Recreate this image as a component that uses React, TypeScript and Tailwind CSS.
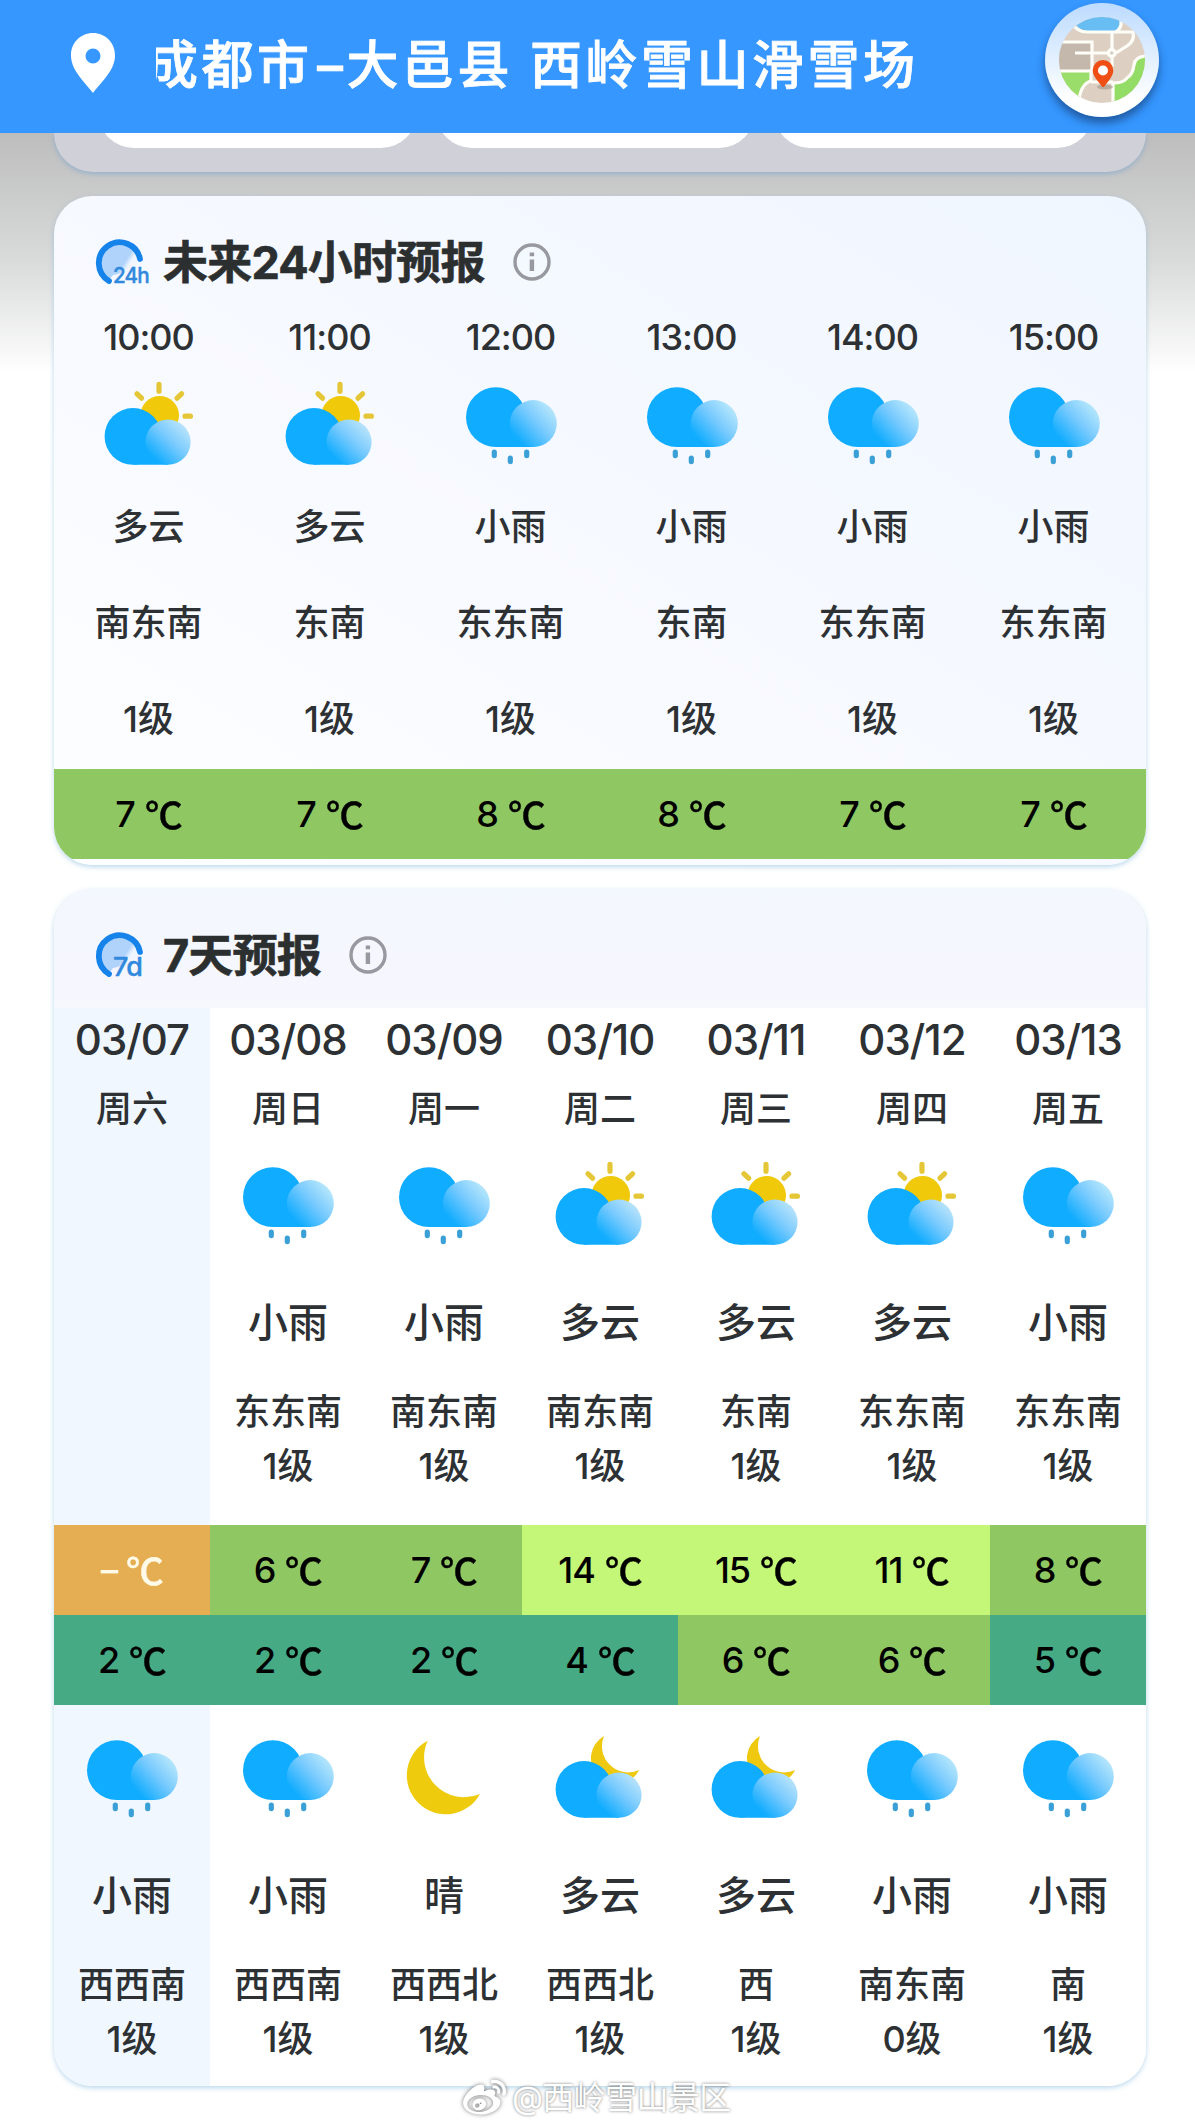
import clsx from "clsx";
import { FaWeibo } from "react-icons/fa";

type Sky = "cloudy" | "rain" | "clear-night" | "cloudy-night";

interface Hour {
  time: string;
  sky: Sky;
  text: string;
  wind: string;
  temp: number;
}

interface HalfDay {
  sky: Sky;
  text: string;
  wind: string;
  level: string;
}

interface Day {
  date: string;
  week: string;
  day?: HalfDay;
  high: string;
  highClass: string;
  low: string;
  lowClass: string;
  night: HalfDay;
}

const hours: Hour[] = [
  { time: "10:00", sky: "cloudy", text: "多云", wind: "南东南", temp: 7 },
  { time: "11:00", sky: "cloudy", text: "多云", wind: "东南", temp: 7 },
  { time: "12:00", sky: "rain", text: "小雨", wind: "东东南", temp: 8 },
  { time: "13:00", sky: "rain", text: "小雨", wind: "东南", temp: 8 },
  { time: "14:00", sky: "rain", text: "小雨", wind: "东东南", temp: 7 },
  { time: "15:00", sky: "rain", text: "小雨", wind: "东东南", temp: 7 },
];

const ORANGE = "bg-[#e5ae53] text-[#fffbe8]";
const GREEN = "bg-[#8fc763] text-black";
const LIME = "bg-[#c4f777] text-black";
const TEAL = "bg-[#46ab85] text-black";

const days: Day[] = [
  {
    date: "03/07",
    week: "周六",
    high: "-",
    highClass: ORANGE,
    low: "2",
    lowClass: TEAL,
    night: { sky: "rain", text: "小雨", wind: "西西南", level: "1级" },
  },
  {
    date: "03/08",
    week: "周日",
    day: { sky: "rain", text: "小雨", wind: "东东南", level: "1级" },
    high: "6",
    highClass: GREEN,
    low: "2",
    lowClass: TEAL,
    night: { sky: "rain", text: "小雨", wind: "西西南", level: "1级" },
  },
  {
    date: "03/09",
    week: "周一",
    day: { sky: "rain", text: "小雨", wind: "南东南", level: "1级" },
    high: "7",
    highClass: GREEN,
    low: "2",
    lowClass: TEAL,
    night: { sky: "clear-night", text: "晴", wind: "西西北", level: "1级" },
  },
  {
    date: "03/10",
    week: "周二",
    day: { sky: "cloudy", text: "多云", wind: "南东南", level: "1级" },
    high: "14",
    highClass: LIME,
    low: "4",
    lowClass: TEAL,
    night: { sky: "cloudy-night", text: "多云", wind: "西西北", level: "1级" },
  },
  {
    date: "03/11",
    week: "周三",
    day: { sky: "cloudy", text: "多云", wind: "东南", level: "1级" },
    high: "15",
    highClass: LIME,
    low: "6",
    lowClass: GREEN,
    night: { sky: "cloudy-night", text: "多云", wind: "西", level: "1级" },
  },
  {
    date: "03/12",
    week: "周四",
    day: { sky: "cloudy", text: "多云", wind: "东东南", level: "1级" },
    high: "11",
    highClass: LIME,
    low: "6",
    lowClass: GREEN,
    night: { sky: "rain", text: "小雨", wind: "南东南", level: "0级" },
  },
  {
    date: "03/13",
    week: "周五",
    day: { sky: "rain", text: "小雨", wind: "东东南", level: "1级" },
    high: "8",
    highClass: GREEN,
    low: "5",
    lowClass: TEAL,
    night: { sky: "rain", text: "小雨", wind: "南", level: "1级" },
  },
];

function SkyIcon({ sky }: { sky: Sky }) {
  return (
    <svg width="108" height="108" viewBox="0 0 108 108" className="shrink-0">
      {sky === "cloudy" && (
        <g stroke="#e4c637" strokeWidth="5.2" strokeLinecap="round">
          <circle cx="64.7" cy="45.3" r="19.3" fill="#efc90a" stroke="none" />
          <path d="M64 14.4v6.8M42 23.8l4.6 4.4M86.6 23.8L82 28.2M90 46.2h5.4" />
        </g>
      )}
      {sky === "cloudy-night" && (
        <path
          d="M58 13A25.6 25.6 0 1 0 93.3 47A26.3 26.3 0 0 1 58 13Z"
          fill="#efc90f"
        />
      )}
      {sky === "clear-night" && (
        <path
          d="M37.7 17.7A39 39 0 1 0 90 71A40 40 0 0 1 37.7 17.7Z"
          fill="#efcb0d"
        />
      )}
      {(sky === "cloudy" || sky === "cloudy-night") && (
        <>
          <path d="M38 66H73v28.7H38z" fill="#10acff" />
          <circle cx="38" cy="66.4" r="28.4" fill="#10acff" />
          <circle cx="73" cy="72.1" r="22.6" fill="url(#puffLow)" />
        </>
      )}
      {sky === "rain" && (
        <>
          <path d="M38.7 47H76v30H38.7z" fill="#10acff" />
          <circle cx="38.9" cy="47.2" r="29.9" fill="#10acff" />
          <circle cx="76.3" cy="53.6" r="23.5" fill="url(#puffHigh)" />
          <path
            d="M37.3 82v3.6M53.3 88v3.6M69.7 82v3.6"
            stroke="#3ba0d6"
            strokeWidth="5.2"
            strokeLinecap="round"
          />
        </>
      )}
    </svg>
  );
}

// shared gradients for the small translucent part of each cloud
function Gradients() {
  return (
    <svg width="0" height="0" className="absolute">
      <defs>
        <linearGradient
          id="puffLow"
          gradientUnits="userSpaceOnUse"
          x1="88"
          y1="56"
          x2="58"
          y2="87"
        >
          <stop offset="0" stopColor="#b5e2fb" />
          <stop offset="0.45" stopColor="#78cafe" />
          <stop offset="1" stopColor="#10acff" />
        </linearGradient>
        <linearGradient
          id="puffHigh"
          gradientUnits="userSpaceOnUse"
          x1="94"
          y1="38"
          x2="60"
          y2="69"
        >
          <stop offset="0" stopColor="#b5e6fb" />
          <stop offset="0.45" stopColor="#78cafe" />
          <stop offset="1" stopColor="#10acff" />
        </linearGradient>
        <linearGradient id="dial" x1="0" y1="0.2" x2="1" y2="0.8">
          <stop offset="0.6" stopColor="#b0d3fc" />
          <stop offset="0.72" stopColor="#f1f6fe" />
        </linearGradient>
      </defs>
    </svg>
  );
}

function DialIcon({ label, small }: { label: string; small?: boolean }) {
  return (
    <svg width="56" height="56" viewBox="0 -3 56 56" className="overflow-visible">
      <path d="M14 42A20 20 0 1 1 44 21.5L36 34 17 38z" fill="url(#dial)" />
      <path
        d="M13 44A20.8 20.8 0 1 1 44 22"
        fill="none"
        stroke="#1583ea"
        strokeWidth="5.8"
        strokeLinecap="round"
      />
      <text
        x="17"
        y="46"
        fontSize={small ? 21 : 26}
        textLength={small ? 36 : 29}
        lengthAdjust="spacingAndGlyphs"
        fill="#3089dd"
        stroke="#3089dd"
        strokeWidth="0.4"
        className="font-[Inter,sans-serif] font-medium"
      >
        {label}
      </text>
    </svg>
  );
}

function InfoIcon() {
  return (
    <svg width="38" height="38" viewBox="0 0 38 38" fill="none">
      <circle cx="19" cy="19" r="17" stroke="#97999e" strokeWidth="3.4" />
      <path d="M16.7 9.5h4.4v3.8h-4.4zM16.7 16.5h4.4v11.4h-4.4z" fill="#97999e" />
    </svg>
  );
}

function MapButton() {
  return (
    <button className="size-[114px] rounded-full bg-linear-to-b from-[#bcdbff] to-white to-85% shadow-[0_6px_8px_rgba(20,50,100,0.6)]">
      <svg width="114" height="114" viewBox="0 0 114 114">
        <clipPath id="mapClip">
          <circle cx="57" cy="57" r="43" />
        </clipPath>
        <g clipPath="url(#mapClip)">
          <path d="M0 0h115v115H0z" fill="#ddd0c3" />
          <path d="M10 40h37v27H10z" fill="#c4b8ac" />
          <path d="M10 69h36v10q-11 3-12 26H10z" fill="#9add6b" />
          <path d="M102 53q-12 0-13 9t-7 13q-3 5-14 5v25h40z" fill="#93dc66" />
          <path d="M27 10h50v12q-1 6-8 6H44q-11-1-14-8z" fill="#68bdf3" />
          <g fill="none" stroke="#fffdf8" strokeWidth="3.2">
            <path d="M27 20q5 9 15 9h46q2 9-6 14t-11 7" />
            <path d="M76 14v8q-1 4-5 7M67 30v16M30 50h32M67 54v10" />
            <path d="M12 39h35v29H12M46 68v10q-12 3-13 28" />
            <path d="M102 53q-12 0-13 9t-7 13q-3 5-14 5v25M46 79h22" />
            <circle cx="66.7" cy="50" r="3.4" fill="#d5d0c8" />
          </g>
        </g>
        <ellipse cx="60" cy="84" rx="8" ry="2.4" fill="#8a7d74" opacity="0.45" />
        <path
          d="M58 57a10.3 10.3 0 0 1 10.3 10.3c0 6-5.6 11.5-9.3 16.7h-1.6c-3.7-5.2-9.7-10.7-9.7-16.7A10.3 10.3 0 0 1 58 57z"
          fill="#ef4e14"
        />
        <circle cx="58" cy="67.5" r="5" fill="#fff" />
      </svg>
    </button>
  );
}

function Temp({ value, className }: { value: string | number; className: string }) {
  return (
    <div
      className={clsx(
        "flex h-[90px] items-center justify-center gap-[11px] text-[36px] leading-[54px] font-medium",
        className
      )}
    >
      <span className={clsx("tracking-[-1px]", value === "-" && "scale-x-150")}>{value}</span>
      <span className="mb-[3px] scale-x-105 font-['Noto_Sans_CJK_SC',sans-serif] [-webkit-text-stroke:0.4px_currentColor]">
        ℃
      </span>
    </div>
  );
}

function CardTitle({ icon, title }: { icon: React.ReactNode; title: string }) {
  return (
    <h2 className="flex h-[50px] items-center pl-[42px] text-[45px] leading-none font-bold tracking-[-0.8px] text-[#2c2f30] [-webkit-text-stroke:0.6px_#2c2f30]">
      {icon}
      <span className="mr-[28px] ml-[11px]">{title}</span>
      <InfoIcon />
    </h2>
  );
}

function Half({ data }: { data?: HalfDay }) {
  return (
    <>
      <div className="h-[108px]">{data && <SkyIcon sky={data.sky} />}</div>
      <p className="mt-[35px] h-[60px] text-[40px] leading-[60px]">{data?.text}</p>
      <p className="mt-[32px] h-[54px] text-[36px] leading-[54px]">{data?.wind}</p>
      <p className="h-[54px] text-[36px] leading-[54px]">{data?.level}</p>
    </>
  );
}

export default function App() {
  return (
    <main className="relative h-[2127px] w-[1195px] overflow-hidden bg-white font-[Inter,'Noto_Sans_CJK_SC',sans-serif] font-medium text-[#2d3134]">
      <Gradients />
      <header className="flex h-[133px] items-start bg-[#3597ff] text-white">
        <svg width="44" height="60" viewBox="0 0 44 60" className="mt-[33px] ml-[71px]">
          <path
            d="M22 0C9.6 0 0 9.8 0 22.3 0 37 12 47 22 60 32 47 44 37 44 22.3 44 9.8 34.4 0 22 0zm0 15.5a7.5 7.5 0 1 1 0 15 7.5 7.5 0 0 1 0-15z"
            fill="#fff"
          />
        </svg>
        {/* the place name scrolls, its first character is partly out of view */}
        <div className="mt-[28px] ml-[41px] w-[780px] overflow-hidden">
          <h1 className="-ml-[10px] flex text-[52px] leading-[76px] tracking-[3.5px] whitespace-pre [-webkit-text-stroke:0.8px_white]">
            成都市
            <span className="inline-flex w-[34px] origin-center scale-x-150 justify-center tracking-normal">
              -
            </span>
            大邑县
            <span className="w-[17px]"> </span>
            西岭雪山滑雪场
          </h1>
        </div>
        <div className="mt-[3px] ml-[109px]">
          <MapButton />
        </div>
      </header>

      <div className="h-[1994px] bg-linear-to-b from-[#bdbdbd] via-[#dadbdb] via-[130px] to-white to-[240px] pr-[49px] pl-[54px]">
        <section className="h-[39px] rounded-b-[40px] bg-[#cfd0d8] pl-[44px] shadow-[0_2px_5px_rgba(130,170,205,0.7)]">
          <div className="flex gap-[19px]">
            <div className="h-[15px] w-[319px] overflow-hidden">
              <div className="-mt-[65px] h-[80px] rounded-[36px] bg-white" />
            </div>
            <div className="h-[15px] w-[319px] overflow-hidden">
              <div className="-mt-[65px] h-[80px] rounded-[36px] bg-white" />
            </div>
            <div className="h-[15px] w-[319px] overflow-hidden">
              <div className="-mt-[65px] h-[80px] rounded-[36px] bg-white" />
            </div>
          </div>
        </section>

        <section className="mt-[24px] h-[669px] overflow-hidden rounded-[38px] bg-linear-to-bl from-[#f0f6ff] via-[#f6f9ff] to-[#fdfeff] pt-[41px] shadow-[0_2px_5px_rgba(120,180,220,0.5)]">
          <CardTitle icon={<DialIcon label="24h" small />} title="未来24小时预报" />
          <div className="mt-[20px] bg-[linear-gradient(to_top,#8fc763_90px,transparent_90px)] pr-[2px] pl-[4px]">
            <div className="grid grid-cols-6">
              {hours.map((hour) => (
                <div key={hour.time} className="flex flex-col items-center text-[36px]">
                  <p className="h-[60px] leading-[60px] tracking-[-1px]">{hour.time}</p>
                  <div className="mt-[3px] h-[108px]">
                    <SkyIcon sky={hour.sky} />
                  </div>
                  <p className="h-[96px] leading-[98px]">{hour.text}</p>
                  <p className="h-[96px] leading-[98px]">{hour.wind}</p>
                  <p className="h-[99px] leading-[98px]">1级</p>
                  <Temp value={hour.temp} className="text-black" />
                </div>
              ))}
            </div>
          </div>
        </section>

        <section className="mt-[24px] h-[1197px] overflow-hidden rounded-[38px] bg-linear-to-b from-[#f3f7fe] to-[#f7f7fe] to-10% pt-[41px] shadow-[0_2px_5px_rgba(120,180,220,0.5)]">
          <CardTitle icon={<DialIcon label="7d" />} title="7天预报" />
          <div className="mt-[28px] grid h-[1078px] grid-cols-7">
            {days.map((day, index) => (
              <div
                key={day.date}
                className={clsx(
                  "flex flex-col items-center",
                  index === 0 ? "bg-[#f0f7ff]" : "bg-white"
                )}
              >
                <p className="h-[62px] text-[42px] leading-[64px] tracking-[-1px]">{day.date}</p>
                <p className="mb-[10px] h-[70px] text-[36px] leading-[79px]">{day.week}</p>
                <Half data={day.day} />
                <div className="mt-[32px] mb-[18px] w-full">
                  <Temp value={day.high} className={day.highClass} />
                  <Temp value={day.low} className={day.lowClass} />
                </div>
                <Half data={day.night} />
              </div>
            ))}
          </div>
        </section>
      </div>

      <div className="absolute top-[2074px] left-[463px] flex items-center text-white">
        <FaWeibo className="size-[43px] drop-shadow-[0_0_2px_rgba(0,0,0,0.55)]" />
        <span className="ml-[6px] text-[32px] leading-[48px] font-normal tracking-[-0.6px] [text-shadow:0_0_3px_rgba(0,0,0,0.55)]">
          @西岭雪山景区
        </span>
      </div>
    </main>
  );
}
